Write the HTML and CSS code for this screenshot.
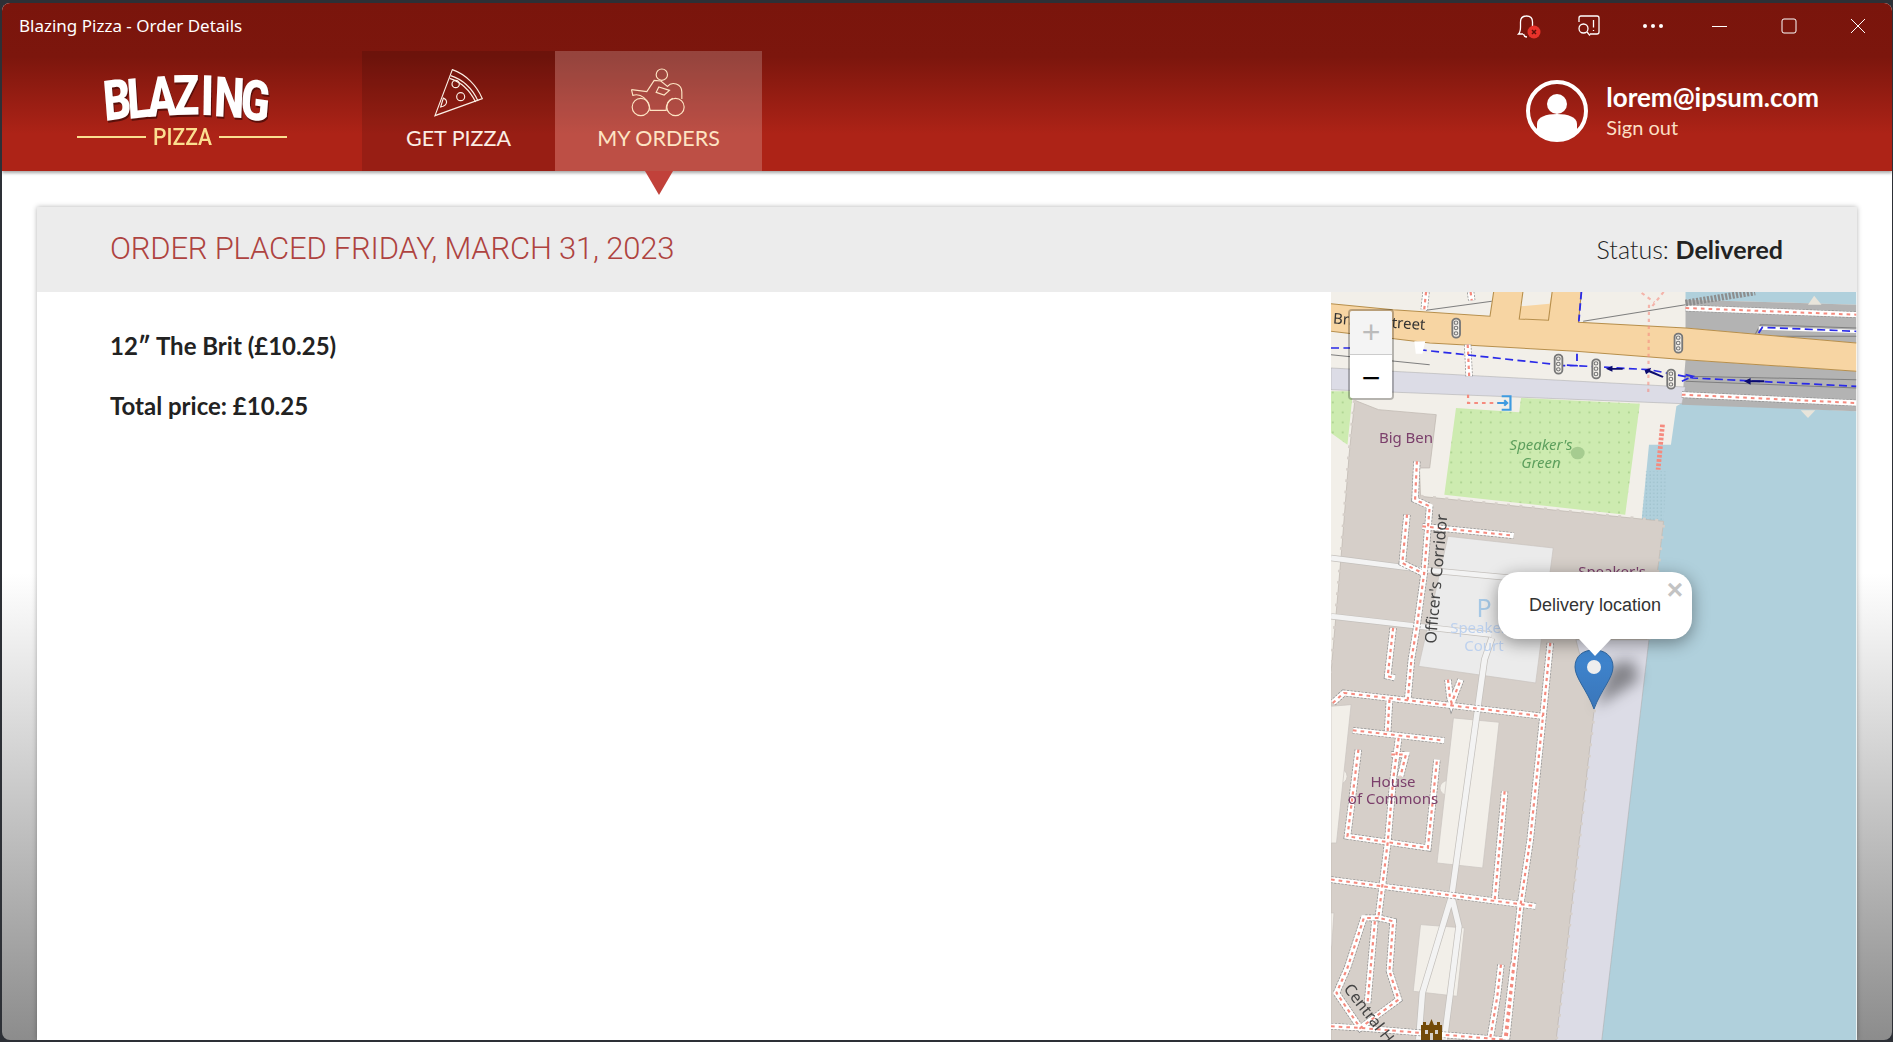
FILE: index.html
```html
<!DOCTYPE html>
<html lang="en">

<head>
    <meta charset="UTF-8" />
    <title>Blazing Pizza - Order Details</title>
    <link rel="stylesheet" href="styles.css">
</head>

<body>
    <div class="window">
        <div class="top-band">
            <div class="title-bar">
                <span class="title-text">Blazing Pizza - Order Details</span>
                <div class="title-buttons">
                    <span class="tb tb-bell">
                        <svg width="26" height="26" viewBox="0 0 26 26" fill="none" stroke="#fff" stroke-width="1.3">
                            <path d="M8 21 H3.5 C5 19.5 5.5 18 5.5 14 V9 C5.5 5 8 3 11.5 3 C15 3 17.5 5 17.5 9 V13" />
                            <path d="M8.5 21 C9 23 10.5 24 12 24" />
                            <circle cx="19" cy="19" r="6.5" fill="#e8322a" stroke="none" />
                            <path d="M17 17 L21 21 M21 17 L17 21" stroke="#5c0f0a" stroke-width="1.5" />
                        </svg>
                    </span>
                    <span class="tb tb-feedback">
                        <svg width="24" height="24" viewBox="0 0 24 24" fill="none" stroke="#fff" stroke-width="1.3">
                            <path d="M2 8 V4 C2 2.8 2.8 2 4 2 H20 C21.2 2 22 2.8 22 4 V18 C22 19.2 21.2 20 20 20 H13" />
                            <path d="M16.5 6 V13.5 M16.5 16 V17" />
                            <circle cx="6.5" cy="14.5" r="4.5" />
                            <path d="M10 18 L13 21.5" />
                        </svg>
                    </span>
                    <span class="tb tb-dots">
                        <svg width="20" height="6" viewBox="0 0 20 6" fill="#fff">
                            <circle cx="2" cy="3" r="2" />
                            <circle cx="10" cy="3" r="2" />
                            <circle cx="18" cy="3" r="2" />
                        </svg>
                    </span>
                    <span class="tb tb-win">
                        <svg width="16" height="16" viewBox="0 0 16 16" stroke="#fff" stroke-width="1"><path d="M0 8.5 H15" /></svg>
                    </span>
                    <span class="tb tb-win">
                        <svg width="16" height="16" viewBox="0 0 16 16" fill="none" stroke="#fff" stroke-width="1"><rect x="1" y="1" width="14" height="14" rx="2" /></svg>
                    </span>
                    <span class="tb tb-win">
                        <svg width="16" height="16" viewBox="0 0 16 16" stroke="#fff" stroke-width="1"><path d="M1 1 L15 15 M15 1 L1 15" /></svg>
                    </span>
                </div>
            </div>

            <header class="app-header">
                <div class="logo">
                    <svg class="logo-top" width="170" height="52" viewBox="0 0 170 52">
                        <g transform="scale(.76 1)">
                            <text x="4 35 61 94 130 147 181" y="46 44 42 40 40 41 43" rotate="-6 -5 -3 -1 1 3 6">BLAZING</text>
                        </g>
                    </svg>
                    <div class="logo-bottom"><i></i><span>PIZZA</span><i></i></div>
                </div>

                <nav class="tabs">
                    <a class="tab">
                        <svg width="50" height="50" viewBox="100 50 150 150" fill="none" stroke="#fbeee4" stroke-width="3.500">
                            <path d="M103 196 L155 58 C195 72 228 105 245 145 Z" />
                            <path d="M150 76 C187 88 215 115 232 152" />
                            <path d="M147 84 C182 95 208 121 225 155" />
                            <circle cx="165" cy="101" r="11" />
                            <circle cx="180" cy="139" r="12" />
                            <path d="M128 143 C142 150 142 165 120 170 Z" />
                        </svg>
                        <span>GET PIZZA</span>
                    </a>
                    <a class="tab active">
                        <svg width="57" height="50" viewBox="690 50 170 150" fill="none" stroke="#fde4c3" stroke-width="3.500">
                            <circle cx="785" cy="73" r="17" />
                            <circle cx="722" cy="170" r="26" />
                            <circle cx="826" cy="170" r="26" />
                            <path d="M694 118 L740 124 L762 90 L782 92 L802 108 C815 92 845 100 845 125 V146" />
                            <path d="M694 118 L698 135 C722 128 745 145 750 180 H798 C798 160 806 148 818 144" />
                            <path d="M776 110 L808 120 L792 134 L768 126 Z" />
                        </svg>
                        <span>MY ORDERS</span>
                    </a>
                </nav>

                <div class="user-info">
                    <svg width="64" height="64" viewBox="0 0 64 64">
                        <circle cx="32" cy="32" r="29" fill="none" stroke="#fff" stroke-width="4" />
                        <circle cx="32" cy="25" r="10" fill="#fff" />
                        <path d="M12 51 V45 C12 38 21 35 32 35 C43 35 52 38 52 45 V51 C47 57 40 60 32 60 C24 60 17 57 12 51 Z" fill="#fff" />
                    </svg>
                    <div class="user-text">
                        <div class="username">lorem@ipsum.com</div>
                        <a class="sign-out">Sign out</a>
                    </div>
                </div>
            </header>
        </div>

        <main class="content">
            <div class="order-card">
                <div class="order-head">
                    <h2>ORDER PLACED FRIDAY, MARCH 31, 2023</h2>
                    <div class="status">Status: <strong>Delivered</strong></div>
                </div>
                <div class="order-body">
                    <div class="order-items">
                        <p>12″ The Brit (£10.25)</p>
                        <p>Total price: £10.25</p>
                    </div>
                    <div class="map">
                        <svg class="map-tiles" width="526" height="748" viewBox="0 0 526 748">
                            <defs>
                                <pattern id="grass-dots" width="27" height="30" patternUnits="userSpaceOnUse">
                                    <circle cx="8" cy="8" r="2.6" fill="#a4cc88" />
                                </pattern>
                                <pattern id="shore-dots" width="10" height="11" patternUnits="userSpaceOnUse">
                                    <circle cx="3" cy="3" r="1.8" fill="#8fb3bd" />
                                </pattern>
                                <linearGradient id="pin-fill" x1="0" y1="0" x2="0" y2="1">
                                    <stop offset="0" stop-color="#3f86d0" />
                                    <stop offset="1" stop-color="#3a76ba" />
                                </linearGradient>
                                <filter id="pin-blur" x="-60%" y="-60%" width="220%" height="220%">
                                    <feGaussianBlur stdDeviation="7" />
                                </filter>
                                <g id="signal">
                                    <rect class="pole" x="-10" y="-28" width="21" height="57" rx="10" />
                                    <circle class="pole-dot" cy="-16" r="5" />
                                    <circle class="pole-dot" r="5" />
                                    <circle class="pole-dot" cy="16" r="5" />
                                </g>
                                <g id="footways">
                                    <path d="M265 545 L260 660 L300 680 L285 880 L265 1040 L250 1140 L240 1260" />
                                    <path d="M238 705 L225 850 L280 880" />
                                    <path d="M280 740 L530 768" />
                                    <path d="M200 1045 L185 1190 L205 1195" />
                                    <path d="M630 1090 L610 1310 L575 1680 L548 1880 L510 2280" />
                                    <path d="M35 1270 L65 1240 L240 1262 L610 1310" />
                                    <path d="M350 1200 L355 1250 L360 1270 L385 1200" />
                                    <path d="M190 1260 L185 1355" />
                                    <path d="M90 1352 L340 1383" />
                                    <path d="M215 1375 L200 1500 L185 1690 L160 1910" />
                                    <path d="M105 1410 L75 1670 L295 1705 L320 1440" />
                                    <path d="M195 1425 H235 L220 1490" />
                                    <path d="M505 1535 L478 1860" />
                                    <path d="M30 1800 L590 1880" />
                                    <path d="M160 1915 H120 L75 2065 L45 2140 L110 2245 L215 2160 L190 2075 L200 1925 L160 1915" />
                                    <path d="M150 1925 L130 2170" />
                                    <path d="M30 2240 L110 2245 L500 2280" />
                                    <path d="M495 2055 L485 2150 L465 2280" />
                                    <path d="M530 2050 L505 2280" />
                                    <path d="M404 195 L408 290 M290 37 L285 90 M412 37 L415 62" />
                                    <path d="M1000 85 L1467 105 M990 345 L1467 370" />
                                </g>
                                <path id="service" d="M30 835 L280 870 L620 905 M30 1010 L270 1040 L470 1065 M470 1075 L450 1140 L360 1850 L280 2140 L270 2280 M360 1850 L380 1940 L340 2280" />
                            </defs>

                            <!-- geometry was measured off the tile, so it keeps tile units -->
                            <g transform="scale(.3655 .3333) translate(-30 -37)">
                                <rect class="land" x="30" y="37" width="1437" height="2250" />
                                <path class="water" d="M1000 37 H1467 V75 L1000 60 Z" />
                                <path class="water" d="M990 370 L1467 395 V2290 H765 L895 1080 L925 860 L940 725 L880 720 L900 495 H960 L975 380 Z" />
                                <path class="shore" d="M890 575 H950 L940 725 L880 720 Z" />
                                <path class="rail" d="M1000 60 L1467 75 V190 L1000 145 Z" />
                                <path class="rail" d="M1000 240 L1467 275 V395 L990 375 Z" />
                                <path class="rail-line" d="M290 92 L470 65 M720 125 L1000 75 M1000 150 L1190 165 L1205 135 L1467 145 M1467 170 L1205 170" />
                                <path class="rail-line" d="M30 225 L300 255 M1467 325 L1000 305 M1000 290 L1467 300" />
                                <path class="bank" d="M30 265 L1000 322 L990 372 L30 330 Z" />

                                <path class="grass" d="M372 385 L545 398 L550 355 L875 372 L835 705 L340 645 Z" />
                                <path class="grass" d="M30 335 H90 L75 495 L30 460 Z" />
                                <path class="grass-dot" d="M372 385 L545 398 L550 355 L875 372 L835 705 L340 645 Z" />
                                <path class="grass-dot" d="M30 335 H90 L75 495 L30 460 Z" />
                                <circle class="tree" cx="705" cy="520" r="19" />

                                <path class="bank" d="M700 1080 H900 L770 2290 H640 Z" />
                                <path class="building" d="M95 362 L160 390 L318 405 L300 565 L272 565 L275 650 L940 725 L925 860 L895 1080 H700 L750 1290 L645 2290 H30 V1180 L60 800 L80 520 Z" />
                                <path class="scallop" d="M275 650 L940 725 L925 860 L900 1080 M750 1290 L645 2290 M95 362 L80 520 L60 800 L30 1180" />
                                <circle class="yard" cx="50" cy="1490" r="24" />
                                <circle class="yard" cx="350" cy="1525" r="22" />
                                <path class="court" d="M350 770 L638 805 L590 1210 L270 1160 Z" />
                                <path class="yard" d="M30 1280 L85 1275 L45 1690 H30 Z" />
                                <path class="yard" d="M365 1315 L490 1328 L445 1765 L320 1750 Z" />
                                <path class="yard" d="M275 1935 L395 1945 L375 2150 L255 2135 Z" />
                                <path class="yard" d="M30 1900 H38 L32 2000 H30 Z" />

                                <use href="#service" class="service-edge" />
                                <use href="#service" class="service-fill" />

                                <path class="road" d="M475 37 H555 L548 80 L628 72 L635 37 H715 L707 128 L1000 145 L1467 190 V275 L1000 240 L700 215 L300 190 L30 155 V72 L200 90 L465 110 Z" />
                                <path class="road-edge" d="M30 72 L200 90 L465 110 L475 37 M555 37 L545 118 L625 122 L635 37 M715 37 L707 128 L1000 145 L1467 190 M1467 275 L1000 240 L700 215 L300 190 L30 155" />
                                <path class="pier" d="M1335 75 L1352 48 L1372 75 Z" />
                                <path class="pier" d="M1315 392 H1355 L1335 415 Z" />

                                <use href="#footways" class="fw-edge" />
                                <use href="#footways" class="fw-fill" />
                                <use href="#footways" class="fw-dash" />
                                <path class="fw-dash fw-faint" d="M900 75 L898 340 M940 37 L905 85 M880 40 L915 68" />
                                <path class="fw-dash" d="M405 345 V370 H490" />
                                <path class="fw-dash fw-thick" d="M937 435 L925 570" />
                                <path class="fw-edge" d="M1000 70 L1190 37" />

                                <path class="cycle-back" d="M1200 145 L1467 155" />
                                <path class="cycle" d="M30 205 H130 M270 210 L650 255 L900 270 L1020 295 L1467 320 M703 222 V258 L660 258 M715 37 L708 125 M1200 160 L1210 143 L1467 155 M1000 285 L1020 290 L990 305" />
                                <path class="arrow" d="M782 267 L800 258 V265 H828 V270 H800 V276 Z" />
                                <path class="arrow" d="M888 272 L906 264 L903 272 L940 290 L937 294 L900 278 L892 284 Z" />
                                <path class="arrow" d="M1160 305 L1178 295 V302 H1215 V308 H1178 V315 Z" />

                                <use href="#signal" x="372" y="145" />
                                <use href="#signal" x="980" y="190" />
                                <use href="#signal" x="652" y="253" />
                                <use href="#signal" x="755" y="267" />
                                <use href="#signal" x="960" y="298" />

                                <path class="entrance" d="M497 350 H521 V390 H497" />
                                <path class="entrance" d="M485 370 H512 M504 362 L512 370 L504 378" />
                                <path class="white-blob" d="M258 185 H288 L280 222 H262 Z" />
                            </g>

                            <g class="labels">
                                <text class="road-label" transform="translate(94 38) rotate(4)" text-anchor="end">Bridge Street</text>
                                <text class="place" x="75" y="151" text-anchor="middle">Big Ben</text>
                                <text class="park" x="210" y="158" text-anchor="middle">Speaker's</text>
                                <text class="park" x="210" y="176" text-anchor="middle">Green</text>
                                <text class="road-label long" transform="translate(105 352) rotate(-85)">Officer's Corridor</text>
                                <text class="place" x="281" y="285" text-anchor="middle">Speaker's</text>
                                <text class="court-p" x="153" y="325" text-anchor="middle">P</text>
                                <text class="court-name" x="153" y="341" text-anchor="middle">Speaker's</text>
                                <text class="court-name" x="153" y="359" text-anchor="middle">Court</text>
                                <text class="place" x="62" y="495" text-anchor="middle">House</text>
                                <text class="place" x="62" y="512" text-anchor="middle">of Commons</text>
                                <text class="road-label long" transform="translate(12 697) rotate(52)">Central Hall</text>
                            </g>

                            <path class="castle" d="M90 748 V733 H92 V730 H95 V733 H98 L100.500 727 L103 733 H106 V730 H109 V733 H111 V748 Z" />
                            <path class="castle-gap" d="M94 738 H97 V742 H94 Z M99 741 H102 V748 H99 Z M104 738 H107 V742 H104 Z" />

                            <path class="pin-shadow" d="M265 415 L308 388 L302 368 L280 372 Z" filter="url(#pin-blur)" />
                            <path class="pin" d="M263 417 C256 398 244 386 244 375 C244 364 252 358 263 358 C274 358 282 364 282 375 C282 386 270 398 263 417 Z" />
                            <circle class="pin-hole" cx="263" cy="375" r="7" />
                        </svg>

                        <div class="zoom-box">
                            <a class="zoom-btn zoom-in">+</a>
                            <a class="zoom-btn zoom-out">−</a>
                        </div>

                        <div class="popup">
                            <span class="popup-close">×</span>
                            Delivery location
                        </div>
                    </div>
                </div>
            </div>
        </main>
    </div>
</body>

</html>
```

FILE: styles.css
```css
html,
body {
    height: 100%;
}

body {
    margin: 0;
    background-color: #2d3036;
    overflow: hidden;
}

.window {
    box-sizing: border-box;
    height: 1037px;
    margin: 3px 1px 0 2px;
    border-radius: 8px;
    overflow: hidden;
    display: flex;
    flex-direction: column;
    font-family: Lato, sans-serif;
    background: linear-gradient(#fff 55%, #8c8c8c 100%);
}

/* title bar + header share one gradient */
.top-band {
    background: linear-gradient(#7a150c 0%, #7c160d 32%, #ad2317 78%, #ad2317 100%);
    box-shadow: 0 2px 3px rgba(0, 0, 0, 0.35);
    position: relative;
}

.title-bar {
    height: 48px;
    display: flex;
    align-items: center;
    justify-content: space-between;
    color: #fff;
}

.title-text {
    font-family: "Noto Sans", sans-serif;
    font-size: 17px;
    padding-left: 17px;
    margin-top: -3px;
}

.title-buttons {
    display: flex;
    height: 100%;
}

.tb {
    display: flex;
    align-items: center;
    justify-content: center;
    margin-top: -2px;
}

.tb-bell {
    width: 62px;
}

.tb-feedback {
    width: 62px;
    padding-right: 2px;
    box-sizing: border-box;
}

.tb-dots {
    width: 64px;
}

.tb-win {
    width: 69px;
}

.app-header {
    height: 120px;
    display: flex;
}

.logo {
    width: 360px;
    box-sizing: border-box;
    padding: 24px 0 0 75px;
}

.logo-top {
    display: block;
    margin-left: 25px;
    filter: drop-shadow(1px 2px 0 #5a0f0a);
}

.logo-top text {
    font-family: Roboto, sans-serif;
    font-weight: 900;
    font-size: 56px;
    fill: #fff;
}

.logo-bottom {
    width: 210px;
    display: flex;
    align-items: center;
    color: #fbdf90;
    font-family: Roboto, sans-serif;
    font-weight: 500;
    font-size: 24px;
    line-height: 20px;
}

.logo-bottom i {
    flex: 1;
    height: 2px;
    background: #fbdf90;
}

.logo-bottom span {
    width: 73px;
    text-align: center;
    transform: scaleX(.88);
}

.tabs {
    display: flex;
}

.tab {
    width: 193px;
    display: flex;
    flex-direction: column;
    align-items: center;
    padding-top: 16px;
    box-sizing: border-box;
    color: #fbeee4;
    font-size: 21.500px;
    background: rgba(0, 0, 0, 0.12);
    position: relative;
}

.tab span {
    margin-top: 8px;
}

.tab.active {
    width: 207px;
    color: #fde4c3;
    background: rgba(255, 255, 255, 0.2);
}

.tab.active::after {
    content: "";
    position: absolute;
    top: 100%;
    left: 50%;
    margin-left: -14px;
    border-left: 14px solid transparent;
    border-right: 14px solid transparent;
    border-top: 24px solid #c1413a;
}

.user-info {
    margin-left: auto;
    display: flex;
    align-items: center;
    gap: 17px;
    padding-right: 73px;
    height: 120px;
}

.username {
    color: #fff;
    font-size: 26px;
    font-weight: 700;
    line-height: 30px;
}

.sign-out {
    display: block;
    margin-top: 2px;
    color: #fbdfc4;
    font-size: 20px;
    line-height: 26px;
}

.content {
    flex: 1;
    min-height: 0;
    display: flex;
    padding: 36px 35px 0;
}

.order-card {
    flex: 1;
    display: flex;
    flex-direction: column;
    background: #fff;
    box-shadow: 0 0 5px rgba(0, 0, 0, 0.3);
}

.order-head {
    height: 85px;
    display: flex;
    align-items: center;
    justify-content: space-between;
    padding: 0 74px 2px 73px;
    box-sizing: border-box;
    background: #ececec;
}

.order-head h2 {
    margin: 0;
    font-family: Roboto, sans-serif;
    font-weight: 300;
    font-size: 31px;
    letter-spacing: -.2px;
    color: #ae4340;
}

.status {
    font-size: 25px;
    font-weight: 300;
    color: #222;
}

.status strong {
    font-weight: 700;
}

.order-body {
    flex: 1;
    min-height: 0;
    display: flex;
}

.order-items {
    flex: 1;
    padding: 39px 73px 0;
}

.order-items p {
    margin: 0 0 31px;
    font-size: 24px;
    line-height: 29px;
    font-weight: 700;
    color: #222;
}

.map {
    width: 526px;
    position: relative;
    overflow: hidden;
}

.map-tiles {
    display: block;
    filter: blur(.4px);
}

/* map colours */
.land { fill: #f2efe9; }
.water { fill: #b0d0dc; }
.shore { fill: url(#shore-dots); }
.rail { fill: #b3b3b3; }
.rail-line { fill: none; stroke: #7f7f7f; stroke-width: 3; }
.bank { fill: #dcdce6; stroke: #aaa; stroke-width: 1.5; }
.grass { fill: #cdebb0; }
.grass-dot { fill: url(#grass-dots); }
.tree { fill: #a6cc90; }
.building { fill: #d6cfc9; stroke: #bdb5ae; stroke-width: 2; }
.scallop { fill: none; stroke: #d6cfc9; stroke-width: 10; stroke-dasharray: 8 26; }
.court { fill: #ebebeb; stroke: #c9c4bf; stroke-width: 2; }
.yard { fill: #f2efe9; stroke: #c9c4bf; stroke-width: 2; }
.service-edge { fill: none; stroke: #c4c0bc; stroke-width: 19; }
.service-fill { fill: none; stroke: #f3f3f3; stroke-width: 15; }
.road { fill: #f7d5a3; }
.road-edge { fill: none; stroke: #b78f4c; stroke-width: 3; }
.pier { fill: #e8e4da; }
.fw-edge { fill: none; stroke: #8d8d8d; stroke-width: 20; stroke-dasharray: 6 4; }
.fw-fill { fill: none; stroke: #fff; stroke-width: 16; }
.fw-dash { fill: none; stroke: #f58a7e; stroke-width: 6; stroke-dasharray: 10 11; }
.fw-faint { opacity: .6; }
.fw-thick { stroke-width: 13; stroke-dasharray: 8 5; }
.cycle-back { fill: none; stroke: #fff; stroke-width: 10; }
.cycle { fill: none; stroke: #2a2ae8; stroke-width: 5; stroke-dasharray: 22 12; }
.arrow { fill: #0b0b6e; }
.pole { fill: #f2efe9; stroke: #777; stroke-width: 5; }
.pole-dot { fill: none; stroke: #777; stroke-width: 3; }
.entrance { fill: none; stroke: #3e9be0; stroke-width: 6; }
.white-blob { fill: #fff; }

.labels text { font-family: "Noto Sans", sans-serif; }
.road-label { font-size: 15px; fill: #333; }
.road-label.long { font-size: 16px; fill: #444; }
.place { font-size: 15px; fill: #7b3f6b; }
.park { font-size: 15px; font-style: italic; fill: #5d9f5d; }
.court-p { font-size: 25px; fill: #a7c9e6; }
.court-name { font-size: 15px; fill: #bdd1ee; }
.castle { fill: #734a08; }
.castle-gap { fill: #d6cfc9; }
.pin { fill: url(#pin-fill); stroke: #2e659e; stroke-width: 1; }
.pin-hole { fill: #eee; }
.pin-shadow { fill: rgba(0, 0, 0, 0.4); }

.zoom-box {
    position: absolute;
    top: 17px;
    left: 17px;
    box-sizing: border-box;
    width: 46px;
    height: 91px;
    border: 2px solid rgba(0, 0, 0, 0.25);
    border-radius: 4px;
    background-clip: padding-box;
    overflow: hidden;
}

.zoom-btn {
    display: block;
    box-sizing: border-box;
    height: 43.500px;
    text-align: center;
    font-family: "Liberation Sans", sans-serif;
    font-size: 32px;
    line-height: 43px;
    background: #fff;
    color: #000;
}

.zoom-in {
    background: #f4f4f4;
    color: #bbb;
    border-bottom: 1px solid #ccc;
}

.zoom-out {
    line-height: 47px;
}

.popup {
    position: absolute;
    left: 167px;
    top: 280px;
    width: 194px;
    height: 67px;
    display: flex;
    align-items: center;
    justify-content: center;
    background: #fff;
    border-radius: 20px;
    box-shadow: 0 4px 17px rgba(0, 0, 0, 0.4);
    font-family: "Liberation Sans", sans-serif;
    font-size: 18px;
    color: #333;
}

.popup::after {
    content: "";
    position: absolute;
    top: 100%;
    left: 50%;
    margin-left: -16px;
    border-left: 16px solid transparent;
    border-right: 16px solid transparent;
    border-top: 17px solid #fff;
}

.popup-close {
    position: absolute;
    top: 4px;
    right: 9px;
    font-size: 28px;
    font-weight: 700;
    line-height: 28px;
    color: #c3c3c3;
}
```
